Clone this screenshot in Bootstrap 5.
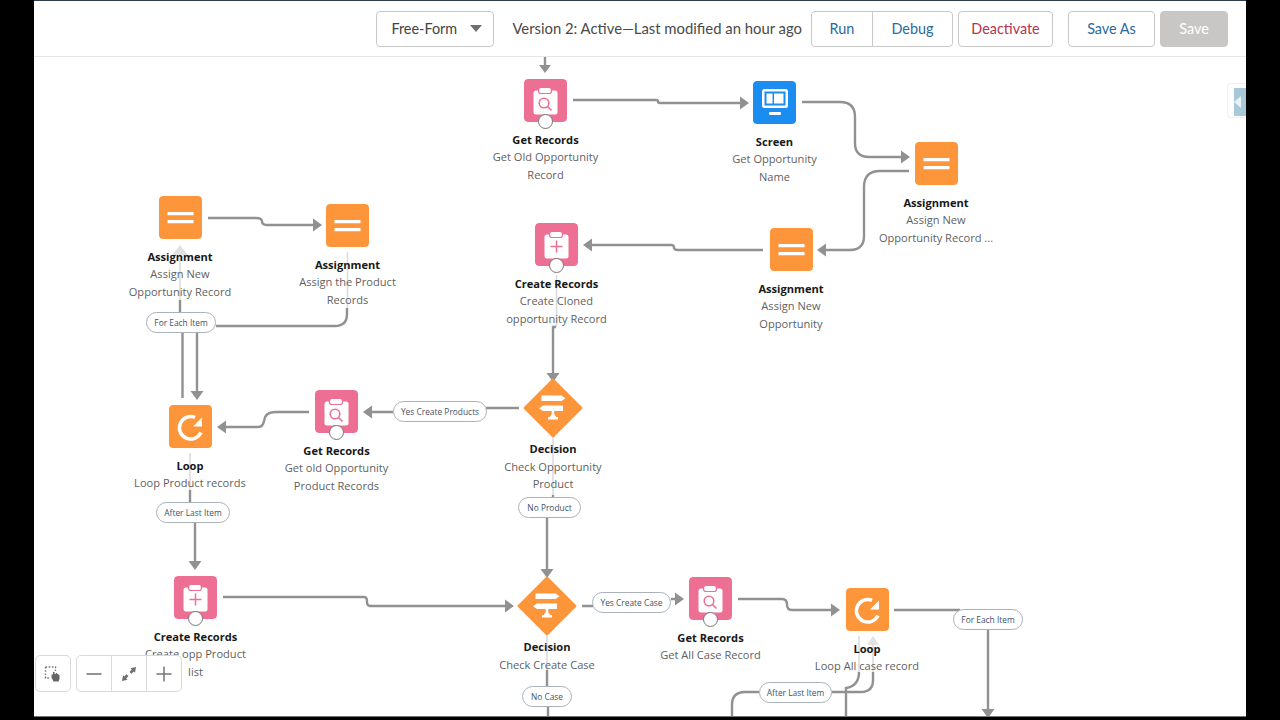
<!doctype html>
<html lang="en">
<head>
<meta charset="utf-8">
<title>Flow Builder</title>
<link href="https://cdn.jsdelivr.net/npm/bootstrap@5.3.0/dist/css/bootstrap.min.css" rel="stylesheet">
<style>
html,body{height:100%;margin:0;background:#000;overflow:hidden}
body{font-family:"Open Sans","Liberation Sans",sans-serif}
.stage{width:1280px;height:720px;background:#000}
.app{width:1212px;height:717px;margin-left:34px;background:#fff;border-bottom:1px solid #777}
.topbar{height:57px;padding:10px 18px 10px 0;background:#fff;border-top:1px solid #2c3e4a;border-bottom:1px solid #e6e6e6;font-family:"Lato","Open Sans",sans-serif;font-size:14.4px;color:#4a4a4a}
.modepick{width:118px;height:36px;padding:0 11px 0 14px;border:1px solid #c9c9c9;border-radius:4px;color:#444}
.modecaret{width:0;height:0;border-left:6px solid transparent;border-right:6px solid transparent;border-top:7px solid #707070}
.verstext{margin:0 9px 0 18px;white-space:nowrap;font-size:14.85px}
.tbtn{height:36px;padding:0;font-size:14.4px;background:#fff;border:1px solid #c9c9c9;border-radius:4px;color:#2a6a9e;display:flex;align-items:center;justify-content:center}
.w-run{width:62px}.w-debug{width:81px}.w-deact{width:95px;color:#b4344d}.w-saveas{width:87px}
.w-save{width:68px;background:#c9c7c5;border-color:#c9c7c5;color:#fff}
.w-deact{margin-left:5px}.w-saveas{margin-left:15px}.w-save{margin-left:5px}
.tbtn:hover{background:#fff}
.canvasarea{height:659px;overflow:hidden}
.plane{left:-34px;top:-57px;width:1280px;height:720px}
.wires{left:0;top:0}
.wire{fill:none;stroke:#919191;stroke-width:2.4}
.wire-faint{fill:none;stroke:#dcdcdc;stroke-width:1.6}
.head{fill:#919191}.head-faint{fill:#e2e2e2}
.fnode{width:160px;transform:translateX(-50%);text-align:center;font-size:11.1px;line-height:17.6px;color:#5f5f5f}
.fnode b{display:block;margin-top:8.5px;color:#181818;font-weight:700}
.ficon{display:block;margin:0 auto;width:43px;height:43px;border-radius:4px}
.ficon-diamond{width:60px;height:60px;margin-bottom:-6.5px}
.pinhole{display:block;width:15px;height:15px;margin:-8px auto -7px;border-radius:50%;background:#fff;border:1.6px solid #767676;position:relative}
.fpill{height:21px;padding-top:1px;background:#fff;border:1px solid #a9b2ba;border-radius:11px;color:#3f5269;font-size:8.4px;white-space:nowrap}
.n1{left:545.5px;top:79px}.n2{left:774.5px;top:81px}.n3{left:936px;top:142px}.n4{left:791px;top:228px}
.n5{left:556.5px;top:223px}.n6{left:180px;top:196px}.n7{left:347.5px;top:204px}.n8{left:190px;top:405px}
.n9{left:336.5px;top:390px}.n10{left:553px;top:378px}.n11{left:195.5px;top:576px}.n12{left:547px;top:576px}
.n13{left:710.5px;top:577px}.n14{left:867px;top:588px}
.p1{left:146px;top:312px;width:70px}.p2{left:393px;top:401px;width:94px}.p3{left:156px;top:502px;width:74px}
.p4{left:518px;top:497px;width:63px}.p5{left:592px;top:592px;width:79px}.p6{left:953px;top:609px;width:70px}
.p7{left:522px;top:686px;width:50px}.p8{left:759px;top:682px;width:73px}
.zoomtools{left:35px;top:655px}
.zbtn{width:36px;height:37px;padding:0;background:#fff;border:1px solid #d9d9d9;display:flex;align-items:center;justify-content:center;border-radius:5px}
.zbtn:hover{background:#fff;border-color:#d9d9d9}
.zsel{width:36px;margin-right:5px}
.sidetoggle{left:1227px;top:83px;width:19px;height:35px;padding:4px 0 3px 6px;background:#fff;border:1px solid #eee;border-right:0;border-radius:4px 0 0 4px}
.sidetab{width:13px;height:28px;background:#a9c9d8}
.sidetri{width:0;height:0;border-top:6px solid transparent;border-bottom:6px solid transparent;border-right:7px solid #e8f1f4}
</style>
</head>
<body>
<svg width="0" height="0" class="position-absolute">
  <defs>
    <symbol id="ic-search" viewBox="0 0 43 43">
      <rect width="43" height="43" rx="4" fill="#ee6f94"/>
      <rect x="9.500" y="11.500" width="24" height="24" rx="2.500" fill="#fff"/>
      <rect x="14.500" y="8.500" width="13" height="6" rx="2.500" fill="#fff" stroke="#ee6f94" stroke-width="1.200"/>
      <circle cx="20" cy="24" r="4.800" fill="none" stroke="#ee6f94" stroke-width="1.500"/>
      <path d="M23.500 27.500l4 4" stroke="#ee6f94" stroke-width="1.700" fill="none"/>
    </symbol>
    <symbol id="ic-plus" viewBox="0 0 43 43">
      <rect width="43" height="43" rx="4" fill="#ee6f94"/>
      <rect x="9.500" y="11.500" width="24" height="24" rx="2.500" fill="#fff"/>
      <rect x="14.500" y="8.500" width="13" height="6" rx="2.500" fill="#fff" stroke="#ee6f94" stroke-width="1.200"/>
      <path d="M21.500 17.500v12M15.500 23.500h12" stroke="#ee6f94" stroke-width="1.500" fill="none"/>
    </symbol>
    <symbol id="ic-assign" viewBox="0 0 43 43">
      <rect width="43" height="43" rx="3.500" fill="#fd963a"/>
      <path d="M8.500 16h26v3.200h-26zM8.500 24h26v3.200h-26z" fill="#fff"/>
    </symbol>
    <symbol id="ic-screen" viewBox="0 0 43 43">
      <rect width="43" height="43" rx="3.500" fill="#1b8cf0"/>
      <rect x="9" y="8" width="26" height="19" rx="2.500" fill="#fff"/>
      <rect x="11.500" y="10.500" width="21" height="14" fill="#1b8cf0"/>
      <rect x="13.500" y="12.500" width="6" height="10" fill="#fff"/>
      <rect x="21" y="12.500" width="9.500" height="10" fill="#fff"/>
      <rect x="16" y="31" width="12" height="3" rx="1" fill="#fff"/>
    </symbol>
    <symbol id="ic-loop" viewBox="0 0 43 43">
      <rect width="43" height="43" rx="3.500" fill="#fd963a"/>
      <path d="M32 27.500A11.300 11.300 0 1 1 26 12.300" fill="none" stroke="#fff" stroke-width="3.500"/>
      <path d="M33 12.500v9h-9z" fill="#fff"/>
    </symbol>
    <symbol id="ic-decision" viewBox="0 0 60 60">
      <path d="M30 1.500 58.500 30 30 58.500 1.500 30z" fill="#fd963a" stroke="#fd963a" stroke-width="2" stroke-linejoin="round"/>
      <path d="M18.500 17.500h20l4 2.700-4 2.700h-20zM20 27.500h20v5.500H20l-4-2.700zM28.700 33h2.600v3h-2.600zM30 34.500l4 5.500h-8z" fill="#fff"/>
      <rect x="25" y="39" width="10" height="2.500" fill="#fff"/>
    </symbol>
  </defs>
</svg>
<div class="stage">
  <div class="app d-flex flex-column">
    <header class="topbar d-flex align-items-center justify-content-end">
      <div class="modepick d-flex align-items-center justify-content-between"><span>Free-Form</span><span class="modecaret"></span></div>
      <span class="verstext">Version 2: Active—Last modified an hour ago</span>
      <div class="btn-group">
        <button type="button" class="btn tbtn w-run">Run</button>
        <button type="button" class="btn tbtn w-debug">Debug</button>
      </div>
      <button type="button" class="btn tbtn w-deact">Deactivate</button>
      <button type="button" class="btn tbtn w-saveas">Save As</button>
      <button type="button" class="btn tbtn w-save">Save</button>
    </header>
    <main class="canvasarea position-relative flex-grow-1">
      <div class="plane position-absolute">
        <svg class="wires position-absolute" width="1280" height="720" viewBox="0 0 1280 720">
          <path class="wire-faint" d="M180 254V300M347.500 252V308M190 453V490M556.500 275V327M553 438V495M547 636V670M859 636V672M873 644V672"/>
          <path class="head-faint" d="M180 245l8 10h-16zM873 636l6 9h-12z"/>
          <path class="wire" d="M545 57V66"/>
          <path class="head" d="M545 73l-6-8h12z"/>
          <path class="wire" d="M573 100H656q2 0 2 1.500t2 1.500H741"/>
          <path class="head" d="M749 103l-9-6.500v13z"/>
          <path class="wire" d="M802 102H840q15 0 15 15V143q0 14 14 14H901"/>
          <path class="head" d="M910 157l-9-6.500v13z"/>
          <path class="wire" d="M909 171H880q-16 0-16 16V236q0 14-14 14H826"/>
          <path class="head" d="M817 250l9-6.500v13z"/>
          <path class="wire" d="M763 250H678q-4 0-4-2.500t-3-2.500H592"/>
          <path class="head" d="M583 245l9-6.500v13z"/>
          <path class="wire" d="M556 327H553V373"/>
          <path class="head" d="M553 382l-6.500-9h13z"/>
          <path class="wire" d="M519 408H486M393 412H371"/>
          <path class="head" d="M363 412l9-6.500v13z"/>
          <path class="wire" d="M309 412H275q-10 0-11 9q-1 6-6 6H226"/>
          <path class="head" d="M217 427l9-6.500v13z"/>
          <path class="wire" d="M208 218H256q6 0 6 3.500t6 3.500H314"/>
          <path class="head" d="M322 225l-9-6.500v13z"/>
          <path class="wire" d="M180 300V312M216 326H335q12 0 12-12V308M182.500 333V398M197 333V391"/>
          <path class="head" d="M197 400l-6.500-9h13z"/>
          <path class="wire" d="M190 490V503M195 523V561"/>
          <path class="head" d="M195 570l-6.500-9h13z"/>
          <path class="wire" d="M223 597H364q3 0 3 4.500t3 4.500H505"/>
          <path class="head" d="M514 606l-9-6.500v13z"/>
          <path class="wire" d="M553 495V498M547 518V569"/>
          <path class="head" d="M547 578l-6.500-9h13z"/>
          <path class="wire" d="M582 606H593M671 599H676"/>
          <path class="head" d="M684 599l-9-6.500v13z"/>
          <path class="wire" d="M738 599H782q5 0 5 5.500t5 5.500H832"/>
          <path class="head" d="M840 610l-9-6.500v13z"/>
          <path class="wire" d="M894 610H960M988 629V710"/>
          <path class="head" d="M988 718l-6.500-9h13z"/>
          <path class="wire" d="M547 670V687M548 706V717"/>
          <path class="wire" d="M859 672q0 14-13 16V717M873 672V680q0 12-12 12H832M759 692H745q-13 0-13 13V717"/>
        </svg>

        <div class="fnode position-absolute n1"><svg class="ficon"><use href="#ic-search"/></svg><span class="pinhole"></span><b>Get Records</b>Get Old Opportunity<br>Record</div>
        <div class="fnode position-absolute n2"><svg class="ficon"><use href="#ic-screen"/></svg><b>Screen</b>Get Opportunity<br>Name</div>
        <div class="fnode position-absolute n3"><svg class="ficon"><use href="#ic-assign"/></svg><b>Assignment</b>Assign New<br>Opportunity Record ...</div>
        <div class="fnode position-absolute n4"><svg class="ficon"><use href="#ic-assign"/></svg><b>Assignment</b>Assign New<br>Opportunity</div>
        <div class="fnode position-absolute n5"><svg class="ficon"><use href="#ic-plus"/></svg><span class="pinhole"></span><b>Create Records</b>Create Cloned<br>opportunity Record</div>
        <div class="fnode position-absolute n6"><svg class="ficon"><use href="#ic-assign"/></svg><b>Assignment</b>Assign New<br>Opportunity Record</div>
        <div class="fnode position-absolute n7"><svg class="ficon"><use href="#ic-assign"/></svg><b>Assignment</b>Assign the Product<br>Records</div>
        <div class="fnode position-absolute n8"><svg class="ficon"><use href="#ic-loop"/></svg><b>Loop</b>Loop Product records</div>
        <div class="fnode position-absolute n9"><svg class="ficon"><use href="#ic-search"/></svg><span class="pinhole"></span><b>Get Records</b>Get old Opportunity<br>Product Records</div>
        <div class="fnode position-absolute n10"><svg class="ficon ficon-diamond"><use href="#ic-decision"/></svg><b>Decision</b>Check Opportunity<br>Product</div>
        <div class="fnode position-absolute n11"><svg class="ficon"><use href="#ic-plus"/></svg><span class="pinhole"></span><b>Create Records</b>Create opp Product<br>list</div>
        <div class="fnode position-absolute n12"><svg class="ficon ficon-diamond"><use href="#ic-decision"/></svg><b>Decision</b>Check Create Case</div>
        <div class="fnode position-absolute n13"><svg class="ficon"><use href="#ic-search"/></svg><span class="pinhole"></span><b>Get Records</b>Get All Case Record</div>
        <div class="fnode position-absolute n14"><svg class="ficon"><use href="#ic-loop"/></svg><b>Loop</b>Loop All case record</div>

        <div class="fpill position-absolute d-flex align-items-center justify-content-center p1">For Each Item</div>
        <div class="fpill position-absolute d-flex align-items-center justify-content-center p2">Yes Create Products</div>
        <div class="fpill position-absolute d-flex align-items-center justify-content-center p3">After Last Item</div>
        <div class="fpill position-absolute d-flex align-items-center justify-content-center p4">No Product</div>
        <div class="fpill position-absolute d-flex align-items-center justify-content-center p5">Yes Create Case</div>
        <div class="fpill position-absolute d-flex align-items-center justify-content-center p6">For Each Item</div>
        <div class="fpill position-absolute d-flex align-items-center justify-content-center p7">No Case</div>
        <div class="fpill position-absolute d-flex align-items-center justify-content-center p8">After Last Item</div>

        <div class="zoomtools position-absolute d-flex">
          <button type="button" class="btn zbtn zsel" aria-label="Select">
            <svg width="18" height="18" viewBox="0 0 18 18"><path d="M1.500 2h10v4M1.500 2v11h5" fill="none" stroke="#777" stroke-width="1.400" stroke-dasharray="1.600 1.600"/><path d="M7.500 9.500h1.500v-2.500h1.500v2h1.300v-1h1.300v1h1.300v1h1.100V14l-1 2.500H9.500l-2-4z" fill="#666"/></svg>
          </button>
          <div class="btn-group">
            <button type="button" class="btn zbtn" aria-label="Zoom out"><svg width="16" height="16" viewBox="0 0 16 16"><path d="M0.500 8h15" stroke="#777" stroke-width="1.600"/></svg></button>
            <button type="button" class="btn zbtn" aria-label="Fit"><svg width="16" height="16" viewBox="0 0 16 16"><path d="M15 1l-5.500 1.300 1.300 1.300-2.300 2.300 1.900 1.900 2.300-2.300 1.300 1.300zM1 15l5.500-1.300-1.300-1.300 2.300-2.300-1.900-1.900-2.300 2.300-1.300-1.300z" fill="#707070"/></svg></button>
            <button type="button" class="btn zbtn" aria-label="Zoom in"><svg width="16" height="16" viewBox="0 0 16 16"><path d="M0.500 8h15M8 0.500v15" stroke="#777" stroke-width="1.500"/></svg></button>
          </div>
        </div>

        <div class="sidetoggle position-absolute"><div class="sidetab d-flex align-items-center justify-content-start"><span class="sidetri"></span></div></div>
      </div>
    </main>
  </div>
</div>
<script src="https://cdn.jsdelivr.net/npm/bootstrap@5.3.0/dist/js/bootstrap.bundle.min.js"></script>
</body>
</html>
